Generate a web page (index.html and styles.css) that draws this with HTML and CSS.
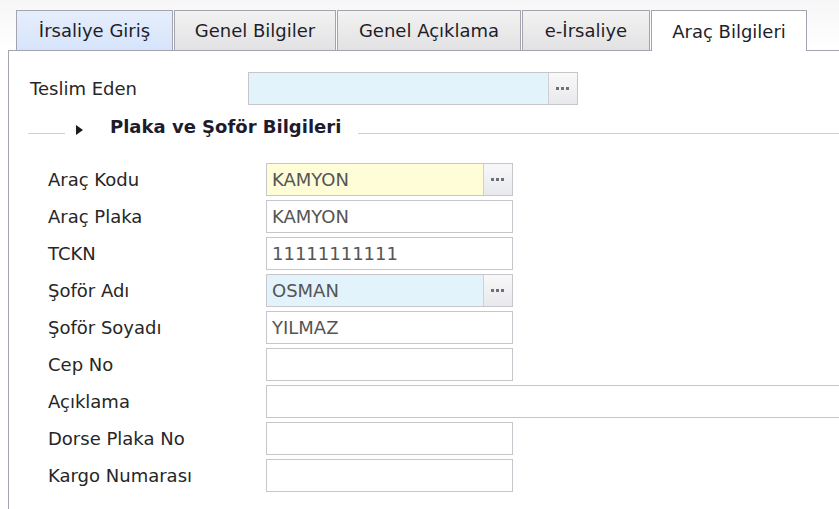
FILE: index.html
```html
<!DOCTYPE html>
<html lang="tr">
<head>
<meta charset="utf-8">
<title>Araç Bilgileri</title>
<link rel="stylesheet" href="styles.css">
</head>
<body>
<div class="tabs">
  <div class="tab tab-hover t1">İrsaliye Giriş</div>
  <div class="tab t2">Genel Bilgiler</div>
  <div class="tab t3">Genel Açıklama</div>
  <div class="tab t4">e-İrsaliye</div>
  <div class="tab tab-active t5">Araç Bilgileri</div>
</div>
<div class="panel">
  <div class="row top-row">
    <label class="lbl">Teslim Eden</label>
    <div class="combo combo-wide">
      <div class="field bg-blue"></div>
      <div class="btn"><svg width="14" height="4" viewBox="0 0 14 4"><rect x="0" y="0" width="3" height="3"/><rect x="5" y="0" width="3" height="3"/><rect x="10" y="0" width="3" height="3"/></svg></div>
    </div>
  </div>
  <div class="section">
    <span class="line line-left"></span>
    <svg class="tri" width="7" height="10" viewBox="0 0 7 10"><path d="M0 0 L7 5 L0 10 Z"/></svg>
    <span class="title">Plaka ve Şoför Bilgileri</span>
    <span class="line line-right"></span>
  </div>
  <div class="fields">
    <div class="row">
      <label class="lbl">Araç Kodu</label>
      <div class="combo">
        <div class="field bg-yellow">KAMYON</div>
        <div class="btn"><svg width="14" height="4" viewBox="0 0 14 4"><rect x="0" y="0" width="3" height="3"/><rect x="5" y="0" width="3" height="3"/><rect x="10" y="0" width="3" height="3"/></svg></div>
      </div>
    </div>
    <div class="row">
      <label class="lbl">Araç Plaka</label>
      <div class="field box">KAMYON</div>
    </div>
    <div class="row">
      <label class="lbl">TCKN</label>
      <div class="field box">11111111111</div>
    </div>
    <div class="row">
      <label class="lbl">Şoför Adı</label>
      <div class="combo">
        <div class="field bg-blue">OSMAN</div>
        <div class="btn"><svg width="14" height="4" viewBox="0 0 14 4"><rect x="0" y="0" width="3" height="3"/><rect x="5" y="0" width="3" height="3"/><rect x="10" y="0" width="3" height="3"/></svg></div>
      </div>
    </div>
    <div class="row">
      <label class="lbl">Şoför Soyadı</label>
      <div class="field box">YILMAZ</div>
    </div>
    <div class="row">
      <label class="lbl">Cep No</label>
      <div class="field box"></div>
    </div>
    <div class="row">
      <label class="lbl">Açıklama</label>
      <div class="field box box-long"></div>
    </div>
    <div class="row">
      <label class="lbl">Dorse Plaka No</label>
      <div class="field box"></div>
    </div>
    <div class="row">
      <label class="lbl">Kargo Numarası</label>
      <div class="field box"></div>
    </div>
  </div>
</div>
</body>
</html>
```
FILE: styles.css
```css
html, body {
  margin: 0;
  padding: 0;
  background: #ffffff;
  overflow: hidden;
}
body {
  width: 839px;
  height: 509px;
  font-family: "DejaVu Sans", Verdana, sans-serif;
  font-size: 18px;
  color: #2a2a2a;
}
.tabs {
  display: flex;
  gap: 1px;
  padding: 10px 0 0 16px;
  background: linear-gradient(#f6f6f6, #ffffff);
  position: relative;
  z-index: 1;
}
.tab {
  box-sizing: border-box;
  height: 40px;
  border: 1px solid #a4a4ae;
  border-bottom: none;
  background: linear-gradient(#f2f2f2, #e2e2e4);
  color: #1e1e2a;
  display: flex;
  align-items: center;
  justify-content: center;
  font-size: 18px;
  white-space: nowrap;
}
.t1 { width: 157px; }
.t2 { width: 162px; }
.t3 { width: 184px; }
.t4 { width: 128px; }
.t5 { width: 156px; }
.tab-hover {
  background: linear-gradient(#e6eefc, #d6e4fb);
}
.tab-active {
  background: #ffffff;
  height: 41px;
  margin-bottom: -1px;
}
.panel {
  margin-left: 8px;
  border-top: 1px solid #a4a4ae;
  border-left: 1px solid #a4a4ae;
  height: 460px;
  box-sizing: border-box;
  padding: 21px 0 0 21px;
}
.row {
  display: flex;
  align-items: center;
  height: 33px;
  margin-bottom: 4px;
}
.lbl {
  width: 218px;
  flex: none;
  font-size: 18px;
  color: #262626;
}
.combo {
  display: flex;
  width: 247px;
  height: 33px;
  box-sizing: border-box;
  border: 1px solid #c6c6cc;
}
.combo-wide {
  width: 330px;
}
.combo .field {
  flex: 1;
}
.field {
  box-sizing: border-box;
  height: 100%;
  padding-left: 5px;
  display: flex;
  align-items: center;
  font-size: 18px;
  color: #555555;
}
.box {
  width: 247px;
  height: 33px;
  border: 1px solid #c6c6cc;
  background: #ffffff;
}
.box-long {
  width: 600px;
  flex: none;
}
.bg-blue { background: #e3f3fc; }
.bg-yellow { background: #fefdd8; }
.btn {
  width: 28px;
  flex: none;
  border-left: 1px solid #cfcfd4;
  background: linear-gradient(#f8f8f9, #e8e9ec);
  display: flex;
  align-items: center;
  justify-content: center;
}
.btn svg { fill: #6f6f78; }
.section {
  display: flex;
  align-items: center;
  height: 22px;
  margin: 11px 0 0 -2px;
}
.line {
  height: 1px;
  background: #cfcfd4;
  align-self: flex-start;
  margin-top: 17px;
}
.line-left {
  width: 37px;
}
.tri {
  fill: #1a1a1a;
  margin: 5px 0 0 11px;
}
.title {
  font-weight: bold;
  font-size: 18px;
  line-height: 22px;
  color: #1c1c2e;
  margin-left: 27px;
  margin-right: 17px;
  white-space: nowrap;
}
.line-right {
  flex: 1;
}
.fields {
  padding-left: 18px;
  margin-top: 25px;
}
```
